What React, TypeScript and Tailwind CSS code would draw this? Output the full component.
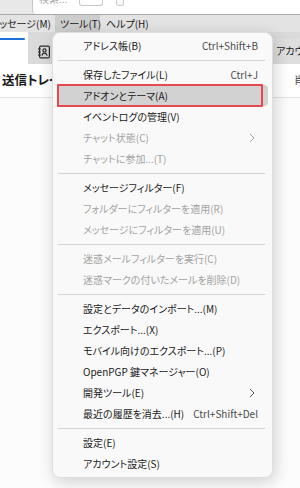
import React from "react";

type Item =
  | { kind: "sep" }
  | { kind: "item"; label: string; shortcut?: string; disabled?: boolean; submenu?: boolean; active?: boolean };

const items: Item[] = [
  { kind: "item", label: "アドレス帳(B)", shortcut: "Ctrl+Shift+B" },
  { kind: "sep" },
  { kind: "item", label: "保存したファイル(L)", shortcut: "Ctrl+J" },
  { kind: "item", label: "アドオンとテーマ(A)", active: true },
  { kind: "item", label: "イベントログの管理(V)" },
  { kind: "item", label: "チャット状態(C)", disabled: true, submenu: true },
  { kind: "item", label: "チャットに参加...(T)", disabled: true },
  { kind: "sep" },
  { kind: "item", label: "メッセージフィルター(F)" },
  { kind: "item", label: "フォルダーにフィルターを適用(R)", disabled: true },
  { kind: "item", label: "メッセージにフィルターを適用(U)", disabled: true },
  { kind: "sep" },
  { kind: "item", label: "迷惑メールフィルターを実行(C)", disabled: true },
  { kind: "item", label: "迷惑マークの付いたメールを削除(D)", disabled: true },
  { kind: "sep" },
  { kind: "item", label: "設定とデータのインポート...(M)" },
  { kind: "item", label: "エクスポート...(X)" },
  { kind: "item", label: "モバイル向けのエクスポート...(P)" },
  { kind: "item", label: "OpenPGP 鍵マネージャー(O)" },
  { kind: "item", label: "開発ツール(E)", submenu: true },
  { kind: "item", label: "最近の履歴を消去...(H)", shortcut: "Ctrl+Shift+Del" },
  { kind: "sep" },
  { kind: "item", label: "設定(E)" },
  { kind: "item", label: "アカウント設定(S)" },
];

function AddressBookIcon() {
  return (
    <svg width="14" height="14" viewBox="0 0 14 14" fill="none" stroke="#2b2b2b" strokeWidth="1.2">
      <rect x="2.6" y="1.1" width="9.8" height="11.8" rx="1.2" />
      <line x1="1" y1="4" x2="3.6" y2="4" />
      <line x1="1" y1="7" x2="3.6" y2="7" />
      <line x1="1" y1="10" x2="3.6" y2="10" />
      <circle cx="7.5" cy="5.4" r="1.6" />
      <path d="M4.9 10.6c0.4-1.6 1.4-2.5 2.6-2.5s2.2 0.9 2.6 2.5" />
    </svg>
  );
}

function Chevron({ color }: { color: string }) {
  return (
    <svg width="6" height="10" viewBox="0 0 6 10" fill="none" stroke={color} strokeWidth="1">
      <path d="M1 1l4 4-4 4" />
    </svg>
  );
}

export default function App() {
  return (
    <div
      className="relative w-[300px] h-[488px] overflow-hidden bg-[#fcfcfc] text-[#1b1b1b] [font-feature-settings:'palt']"
      style={{ fontFamily: '"Noto Sans CJK JP", "Noto Sans", sans-serif' }}
    >
      {/* top strip with search box */}
      <div className="flex h-[15px] bg-[#e8e8e8] border-b border-[#a9a9a9]">
        <div className="w-[32px]" />
        <div className="relative flex-1 flex items-start bg-white border-l border-[#c4c4c4] rounded-bl-[4px] overflow-hidden">
          <span className="ml-[6px] -mt-[8px] text-[10px] text-[#a8a8a8] leading-[14px]">検索...</span>
          <div className="ml-[12px] w-[24px] h-[6px] border border-t-0 border-[#c8c8c8] rounded-b-[3px] bg-white" />
          <div className="ml-[13px] w-[8px] h-[6px] border border-t-0 border-[#c8c8c8] rounded-b-[3px] bg-white" />
        </div>
      </div>

      {/* menubar */}
      <div className="flex h-[17px] items-stretch bg-[#e3e3e3] text-[10px] leading-[17px] whitespace-nowrap">
        <div className="w-[55px] flex justify-end pr-[4px] overflow-hidden">
          <span className="shrink-0">メッセージ(M)</span>
        </div>
        <span className="w-[45px] pl-[5px] bg-[#cdcdcd]">ツール(T)</span>
        <span className="pl-[6px]">ヘルプ(H)</span>
      </div>

      {/* tab bar */}
      <div className="flex h-[32px] bg-[#dadada]">
        <div className="w-[28px] bg-white">
          <div className="mt-[6px] h-[2px] w-[25px] bg-[#1f6fd8] rounded-r-[1px]" />
        </div>
        <div className="flex-1 flex items-start pl-[9px] pt-[13px]">
          <AddressBookIcon />
        </div>
        <div className="w-[27px] mt-[7px] bg-[#dedede] pl-[3px] pt-[4px] text-[10px] whitespace-nowrap overflow-hidden">
          アカウ
        </div>
      </div>

      {/* content header */}
      <div className="flex h-[34px] items-center justify-between bg-white border-b border-[#e2e2e2] pl-[2px] whitespace-nowrap">
        <span className="text-[12.5px] font-bold">送信トレイ</span>
        <span className="w-[6px] overflow-hidden text-[10px] text-[#444] -mt-[2px]">肖</span>
      </div>

      {/* dropdown menu */}
      <div className="absolute left-[52px] top-[32px] w-[221px] rounded-[8px] bg-[#f9f9f9] border border-[#dedede] shadow-[2px_4px_16px_rgba(0,0,0,0.18)] pt-[2px] pb-[3px] text-[10px]">
        {items.map((it, i) =>
          it.kind === "sep" ? (
            <div key={i} className="h-[8px] flex items-center pl-[5px] pr-[7px]">
              <div className="h-px w-full bg-[#d3d3d3]" />
            </div>
          ) : (
            <div
              key={i}
              className={`relative mx-[4px] h-[21px] flex items-center pl-[26px] pr-[10px] rounded-[4px] whitespace-nowrap ${
                it.active ? "bg-[#d2d2d2]" : ""
              } ${it.disabled ? "text-[#a3a3a3]" : "text-[#1b1b1b]"}`}
            >
              <span className="flex-1">{it.label}</span>
              {it.shortcut && <span className="text-[#4a4a4a]">{it.shortcut}</span>}
              {it.submenu && (
                <span className="mr-[3px] flex items-center">
                  <Chevron color={it.disabled ? "#a3a3a3" : "#555"} />
                </span>
              )}
              {it.active && (
                <div className="absolute left-0 right-[5px] -top-[1px] -bottom-[1px] border-2 border-[#e5484d] rounded-[1px]" />
              )}
            </div>
          )
        )}
      </div>
    </div>
  );
}
